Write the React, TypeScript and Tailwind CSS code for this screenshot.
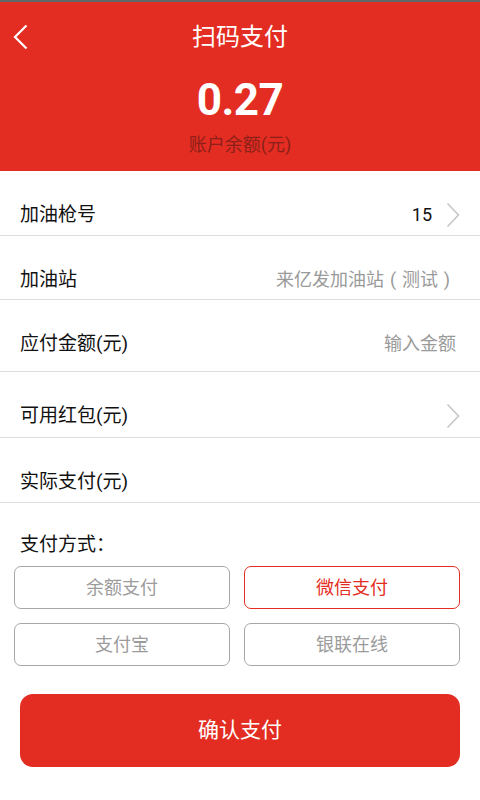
import React from 'react'

const FONT = { fontFamily: "Roboto, 'Noto Sans CJK SC', sans-serif" }

const Chevron = () => (
  <svg width="14" height="26" viewBox="0 0 14 26" fill="none" className="shrink-0">
    <path d="M1.5 1.5 L12.5 13 L1.5 24.5" stroke="#c6c6c6" strokeWidth="1.6" />
  </svg>
)

// 全角括号居中显示
const Paren = ({ c }: { c: string }) => (
  <span className="inline-block w-[18px] text-center">{c}</span>
)

const rows = [
  { label: '加油枪号', value: '15', valueDark: true, arrow: true, pb: 'pb-[6px]' },
  {
    label: '加油站',
    value: (
      <>
        来亿发加油站<Paren c="(" />测试<Paren c=")" />
      </>
    ),
    pb: 'pb-[5px]',
  },
  { label: '应付金额(元)', value: '输入金额', pb: 'pb-[13px]' },
  { label: '可用红包(元)', arrow: true, pb: 'pb-[7px]' },
  { label: '实际支付(元)', pb: 'pb-[6px]' },
]

const methods = [
  { name: '余额支付', active: false },
  { name: '微信支付', active: true },
  { name: '支付宝', active: false },
  { name: '银联在线', active: false },
]

export default function App() {
  return (
    <div className="w-[480px] h-[800px] bg-white overflow-hidden" style={FONT}>
      {/* 状态栏 */}
      <div className="h-[2px] bg-[#5d6868]" />

      {/* 头部 */}
      <div className="bg-[#e42d22] flex flex-col items-center pb-[14px]">
        <div className="relative w-full h-[70px] flex items-center justify-center">
          <svg width="16" height="26" viewBox="0 0 16 26" fill="none" className="absolute left-[13px] top-[22px]">
            <path d="M13.5 1.5 L2 13 L13.5 24.5" stroke="#fff" strokeWidth="2.2" />
          </svg>
          <span className="text-white text-[24px] leading-[30px]">扫码支付</span>
        </div>
        <div className="mt-[4px] text-white font-bold text-[44px] leading-[48px] tracking-[-0.5px]">0.27</div>
        <div className="mt-[9px] text-[#8c1f19] text-[18px] leading-[24px]">账户余额(元)</div>
      </div>

      {/* 表单 */}
      {rows.map((r) => (
        <div key={r.label} className="border-b border-[#dedede]">
          <div className={`flex items-center pl-[20px] pr-[20px] pt-[30px] ${r.pb}`}>
            <span className="flex-1 text-[19px] leading-[28px] text-[#111]">{r.label}</span>
            {r.value && (
              <span
                className={`text-[18px] leading-[28px] ${
                  r.valueDark ? 'text-[#111] mr-[14px]' : 'text-[#9a9a9a] mr-[4px]'
                }`}
              >
                {r.value}
              </span>
            )}
            {r.arrow && <Chevron />}
          </div>
        </div>
      ))}

      {/* 支付方式 */}
      <div className="mt-[28px] pl-[20px] text-[19px] leading-[28px] text-[#111]">支付方式：</div>
      <div className="mt-[7px] grid grid-cols-2 gap-x-[14px] gap-y-[14px] pl-[14px] pr-[20px]">
        {methods.map((m) => (
          <div
            key={m.name}
            className={`h-[43px] rounded-[7px] border flex items-center justify-center text-[18px] ${
              m.active ? 'border-[#e42d22] text-[#e42d22]' : 'border-[#a6a6a6] text-[#9c9c9c]'
            }`}
          >
            {m.name}
          </div>
        ))}
      </div>

      {/* 确认按钮 */}
      <div className="mt-[28px] px-[20px]">
        <div className="h-[73px] rounded-[13px] bg-[#e42d22] flex items-center justify-center text-white text-[21px]">
          确认支付
        </div>
      </div>
    </div>
  )
}
